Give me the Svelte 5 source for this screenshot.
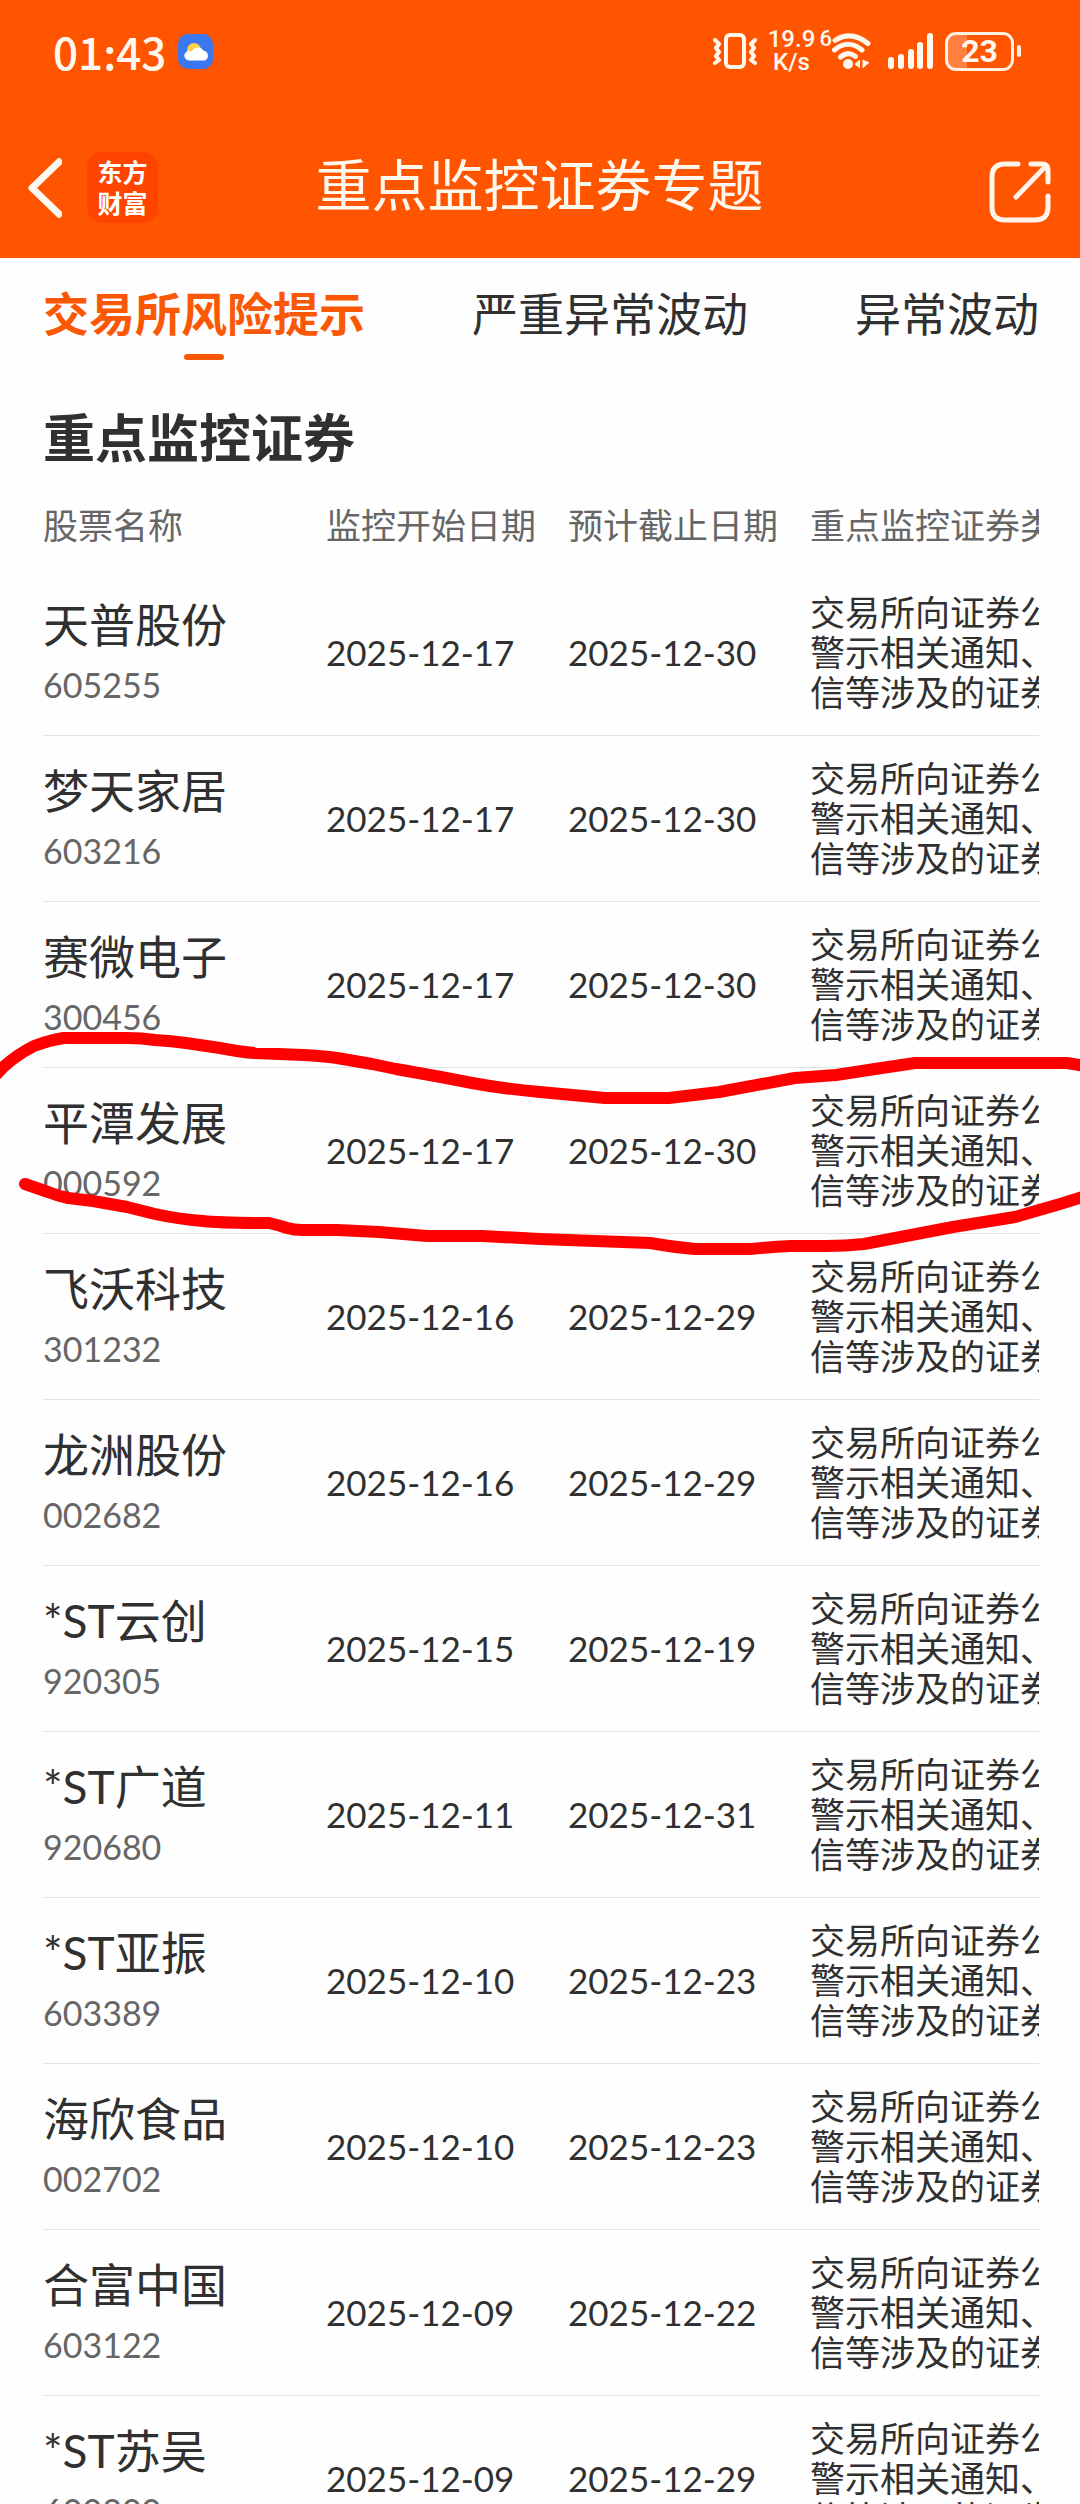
<script lang="ts">
  interface Stock {
    name: string;
    code: string;
    start: string;
    end: string;
  }

  const tabs = ["交易所风险提示", "严重异常波动", "异常波动"];
  const columns = ["股票名称", "监控开始日期", "预计截止日期", "重点监控证券类"];
  const noteLines = ["交易所向证券公", "警示相关通知、", "信等涉及的证券"];

  const stocks: Stock[] = [
    { name: "天普股份", code: "605255", start: "2025-12-17", end: "2025-12-30" },
    { name: "梦天家居", code: "603216", start: "2025-12-17", end: "2025-12-30" },
    { name: "赛微电子", code: "300456", start: "2025-12-17", end: "2025-12-30" },
    { name: "平潭发展", code: "000592", start: "2025-12-17", end: "2025-12-30" },
    { name: "飞沃科技", code: "301232", start: "2025-12-16", end: "2025-12-29" },
    { name: "龙洲股份", code: "002682", start: "2025-12-16", end: "2025-12-29" },
    { name: "*ST云创", code: "920305", start: "2025-12-15", end: "2025-12-19" },
    { name: "*ST广道", code: "920680", start: "2025-12-11", end: "2025-12-31" },
    { name: "*ST亚振", code: "603389", start: "2025-12-10", end: "2025-12-23" },
    { name: "海欣食品", code: "002702", start: "2025-12-10", end: "2025-12-23" },
    { name: "合富中国", code: "603122", start: "2025-12-09", end: "2025-12-22" },
    { name: "*ST苏吴", code: "600200", start: "2025-12-09", end: "2025-12-29" },
  ];

  let activeTab = $state(0);
</script>

<div class="page">
  <header class="top">
    <div class="status">
      <span class="clock">01:43</span>
      <svg class="weather" viewBox="0 0 35 35" aria-hidden="true">
        <rect width="35" height="35" rx="10" fill="#3b78f0" />
        <circle cx="16" cy="16" r="7" fill="#ffd04a" />
        <path
          d="M11 26.500a4.700 4.700 0 0 1 0-9.400c1 0 2 .3 2.700.9a6.500 6.500 0 0 1 11.800-1.200 5 5 0 0 1 1 9.700z"
          fill="#fff"
        />
      </svg>
      <div class="indicators">
        <svg class="vibrate" viewBox="0 0 44 36" aria-hidden="true">
          <g fill="none" stroke="#fff8ee" stroke-linecap="round" stroke-linejoin="round">
            <rect x="13" y="2" width="18" height="32" rx="4" stroke-width="4" />
            <path d="M2 7l4 4-3 4 3 4-3 4 3 4-4 3M42 7l-4 4 3 4-3 4 3 4-3 4 4 3" stroke-width="4" />
          </g>
        </svg>
        <span class="speed"><span>19.9</span><span>K/s</span></span>
        <span class="wifi-gen">6</span>
        <svg class="wifi" viewBox="0 0 40 36" aria-hidden="true">
          <g fill="none" stroke="#fff8ee" stroke-width="5" stroke-linecap="round">
            <path d="M3 7.500Q19 -3 36 10.500" />
            <path d="M2.500 17Q16 5.500 30 17" />
            <path d="M8.500 24Q16 17.500 23.500 23.500" />
          </g>
          <circle cx="16" cy="31" r="5" fill="#fff8ee" />
          <path d="M28 26.500v9l-5.500-4.500zM30.500 26.500v9l7-6z" fill="#fff8ee" />
        </svg>
        <svg class="signal" viewBox="0 0 46 36" aria-hidden="true">
          <g fill="#fff8ee">
            <rect x="0" y="24" width="6" height="12" rx="3" />
            <rect x="10" y="21" width="6" height="15" rx="3" />
            <rect x="20" y="16" width="6" height="20" rx="3" />
            <rect x="29" y="9" width="6" height="27" rx="3" />
            <rect x="39" y="0" width="6" height="36" rx="3" />
          </g>
        </svg>
        <span class="battery"><span>23</span></span>
      </div>
    </div>

    <nav class="bar">
      <div class="side">
        <button class="icon-button" type="button" aria-label="返回">
          <svg class="back" viewBox="0 0 34 60" aria-hidden="true">
            <path
              d="M31 4L4 30 31 56"
              fill="none"
              stroke="#fff8ee"
              stroke-width="7"
              stroke-linecap="square"
              stroke-linejoin="round"
            />
          </svg>
        </button>
        <span class="logo"><span>东方</span><span>财富</span></span>
      </div>
      <h1>重点监控证券专题</h1>
      <div class="side side-end">
        <button class="icon-button" type="button" aria-label="分享">
          <svg class="share" viewBox="0 0 62 71" aria-hidden="true">
            <path
              d="M29 12H16Q3 12 3 25V55Q3 68 16 68H46Q59 68 59 55V44M42 12H53Q59 12 59 18V30M57 14L27 45"
              fill="none"
              stroke="#fff3ea"
              stroke-width="5"
              stroke-linecap="round"
            />
          </svg>
        </button>
      </div>
    </nav>
  </header>

  <div class="tabs" role="tablist">
    {#each tabs as tab, index}
      <button
        class="tab"
        class:active={index === activeTab}
        type="button"
        role="tab"
        aria-selected={index === activeTab}
        onclick={() => (activeTab = index)}
      >
        {tab}
      </button>
    {/each}
  </div>

  <main class="content">
    <h2>重点监控证券</h2>
    <div class="table-wrap">
      <table>
        <colgroup>
          <col class="col-name" />
          <col class="col-date" />
          <col class="col-date" />
          <col class="col-note" />
        </colgroup>
        <thead>
          <tr>
            {#each columns as column}
              <th scope="col">{column}</th>
            {/each}
          </tr>
        </thead>
        <tbody>
          {#each stocks as stock}
            <tr>
              <td>
                <span class="name">{stock.name}</span>
                <span class="code">{stock.code}</span>
              </td>
              <td>{stock.start}</td>
              <td>{stock.end}</td>
              <td>
                {#each noteLines as line}
                  <span>{line}</span>
                {/each}
              </td>
            </tr>
          {/each}
        </tbody>
      </table>
    </div>
  </main>

  <!-- hand-drawn ring around one row -->
  <svg class="marker" viewBox="0 1020 1080 240" preserveAspectRatio="none" aria-hidden="true">
    <g fill="none" stroke="#f00" stroke-width="12" stroke-linecap="round" stroke-linejoin="round">
      <path
        d="M-6 1077Q10 1058 34 1046Q50 1040 64 1038H127Q142 1038 155 1040Q172 1041 186 1043L220 1048Q240 1052 255 1053L303 1055Q322 1056 337 1058L372 1064 396 1069 441 1077 472 1083Q505 1089 540 1092L605 1098H669L719 1092 795 1078 836 1075 875 1069 915 1063H1067L1086 1066"
      />
      <path
        d="M25 1184L48 1192Q58 1196 68 1198L93 1201 127 1207 155 1214Q178 1219 203 1221Q220 1223 269 1223Q278 1225 287 1228Q294 1230 302 1230H337L379 1232 427 1236H482L540 1239 650 1243Q672 1247 695 1249H750Q770 1247 791 1246H826Q846 1246 864 1244L953 1227 1015 1217 1060 1204 1086 1196"
      />
    </g>
  </svg>
</div>

<style>
  :global(body) {
    margin: 0;
    background: #fefefe;
  }

  .page {
    position: relative;
    height: 100vh;
    overflow: hidden;
    color: #303030;
    background: #fefefe;
    font-family: Lato, "Noto Sans CJK SC", sans-serif;
  }

  button {
    padding: 0;
    border: 0;
    background: none;
    color: inherit;
    font: inherit;
    cursor: pointer;
  }

  svg {
    display: block;
  }

  .top {
    padding-top: 31px;
    background: #ff5500;
    color: #fff8ee;
  }

  .status {
    display: flex;
    align-items: center;
    height: 40px;
    padding: 0 66px 0 53px;
  }

  .clock {
    font-family: "Noto Sans CJK SC", sans-serif;
    font-size: 44px;
    font-weight: 500;
    line-height: 40px;
  }

  .weather {
    width: 35px;
    height: 35px;
    margin-left: 12px;
  }

  .indicators {
    display: flex;
    align-items: center;
    margin-left: auto;
    font-family: Roboto, sans-serif;
    font-weight: 500;
  }

  .vibrate {
    width: 44px;
    height: 36px;
  }

  .speed {
    display: flex;
    flex-direction: column;
    width: 52px;
    margin-left: 8px;
    font-size: 24px;
    line-height: 23px;
    text-align: center;
  }

  .wifi-gen {
    align-self: flex-start;
    margin-left: 2px;
    font-size: 22px;
    line-height: 22px;
  }

  .wifi {
    width: 40px;
    height: 36px;
  }

  .signal {
    width: 46px;
    height: 36px;
    margin-left: 16px;
  }

  .battery {
    position: relative;
    display: flex;
    align-items: center;
    justify-content: center;
    box-sizing: border-box;
    width: 69px;
    height: 39px;
    margin-left: 11px;
    border: 3px solid #fff0e0;
    border-radius: 11px;
    background: linear-gradient(90deg, #ff8040 30%, transparent 30%);
    font-size: 32px;
    font-weight: 700;
    line-height: 33px;
  }

  .battery::after {
    content: "";
    position: absolute;
    right: -10px;
    width: 4px;
    height: 12px;
    border-radius: 2px;
    background: #fff0e0;
  }

  .bar {
    display: flex;
    align-items: center;
    padding: 81px 29px 35px 28px;
  }

  .side {
    display: flex;
    flex: 1;
    align-items: center;
  }

  .side-end {
    justify-content: flex-end;
  }

  .back {
    width: 34px;
    height: 60px;
  }

  .logo {
    display: flex;
    flex-direction: column;
    justify-content: center;
    width: 71px;
    height: 71px;
    margin-left: 25px;
    border-radius: 15px;
    background: #ff4400;
    color: #fff;
    font-size: 25px;
    font-weight: 700;
    line-height: 31px;
    text-align: center;
  }

  h1 {
    margin: 0;
    padding-bottom: 6px;
    font-size: 56px;
    font-weight: 400;
    line-height: 64px;
  }

  .share {
    width: 62px;
    height: 71px;
  }

  .tabs {
    display: flex;
    justify-content: space-between;
    padding: 26px 41px 0 43px;
  }

  .tab {
    display: flex;
    flex-direction: column;
    align-items: center;
    gap: 10px;
    font-size: 46px;
    line-height: 60px;
  }

  .tab::after {
    content: "";
    width: 40px;
    height: 6px;
    border-radius: 3px;
  }

  .active {
    color: #fb5806;
    font-weight: 700;
  }

  .active::after {
    background: #fb5806;
  }

  .content {
    padding: 43px 41px 0 43px;
  }

  h2 {
    margin: 0;
    font-size: 52px;
    font-weight: 700;
    line-height: 70px;
  }

  .table-wrap {
    overflow: hidden;
  }

  table {
    width: 1025px;
    table-layout: fixed;
    border-spacing: 0;
    font-size: 35px;
  }

  .col-name {
    width: 270px;
  }

  .col-date {
    width: 242px;
  }

  .col-note {
    width: 271px;
  }

  th {
    padding: 27px 0 20px 13px;
    color: #666;
    font-weight: 400;
    line-height: 50px;
    text-align: left;
    white-space: nowrap;
  }

  td {
    padding: 22px 0 23px 13px;
    border-bottom: 1px solid #e4e4e4;
    line-height: 40px;
    white-space: nowrap;
  }

  th:first-child {
    padding-left: 0;
  }

  td:first-child {
    padding: 25px 0 20px;
  }

  td span {
    display: block;
  }

  .name {
    font-size: 46px;
    line-height: 60px;
  }

  .code {
    color: #666;
    font-size: 34px;
    line-height: 60px;
  }

  .marker {
    position: absolute;
    top: 1020px;
    left: 0;
    width: 100%;
    height: 240px;
    pointer-events: none;
  }
</style>
